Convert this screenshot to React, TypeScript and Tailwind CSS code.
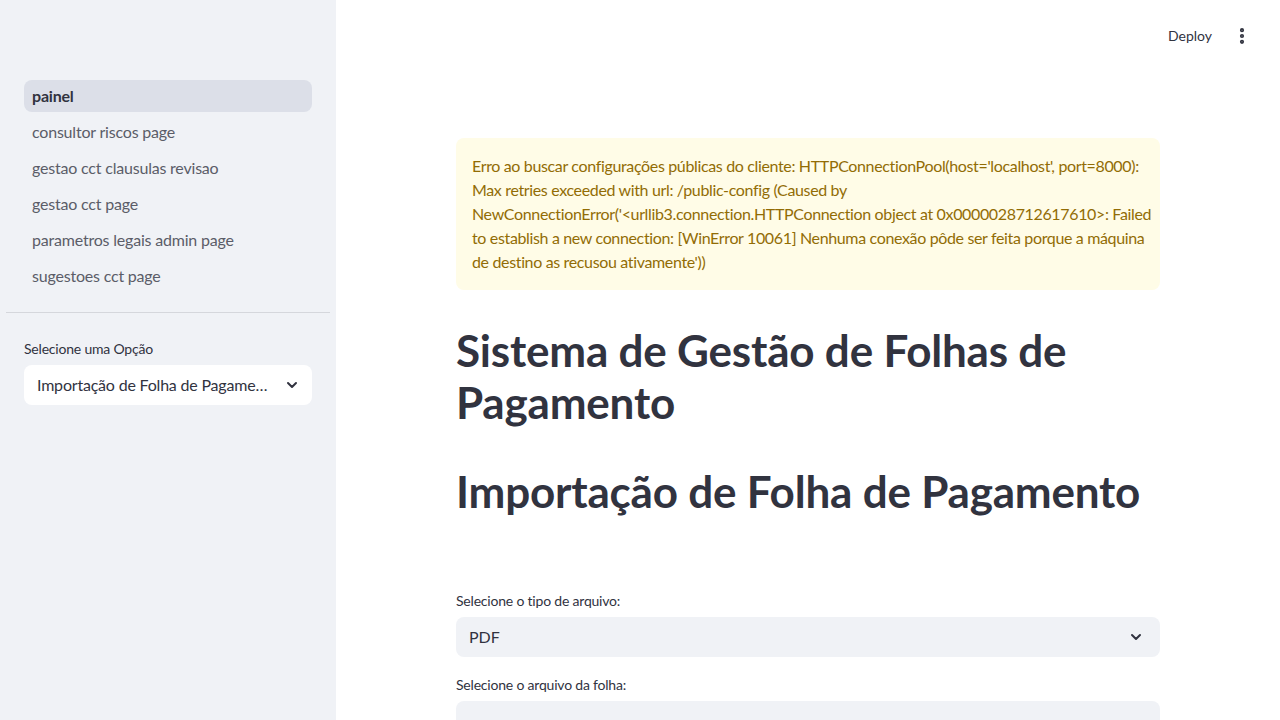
import { ChevronDown, EllipsisVertical } from 'lucide-react'

const pages = [
  'painel',
  'consultor riscos page',
  'gestao cct clausulas revisao',
  'gestao cct page',
  'parametros legais admin page',
  'sugestoes cct page',
]

const warningLines = [
  "Erro ao buscar configurações públicas do cliente: HTTPConnectionPool(host='localhost', port=8000):",
  'Max retries exceeded with url: /public-config (Caused by',
  "NewConnectionError('<urllib3.connection.HTTPConnection object at 0x0000028712617610>: Failed",
  'to establish a new connection: [WinError 10061] Nenhuma conexão pôde ser feita porque a máquina',
  "de destino as recusou ativamente'))",
]

function Sidebar() {
  return (
    <aside className="w-[336px] shrink-0 bg-[#f0f2f6] h-screen flex flex-col">
      <nav className="pt-20 px-6 flex flex-col gap-1 tracking-[-0.2px]">
        {pages.map((p, i) => (
          <div
            key={p}
            className={
              i === 0
                ? 'h-8 flex items-center px-2 rounded-lg bg-[#dcdfe8] font-bold text-[#31333f] text-base'
                : 'h-8 flex items-center px-2 rounded-lg text-[#5b5d68] text-base'
            }
          >
            {p}
          </div>
        ))}
      </nav>
      <div className="mx-1.5 mt-5 border-t border-[#d5d7dc]" />
      <div className="px-6 pt-[26px]">
        <div className="text-sm text-[#31333f] mb-1.5 tracking-[-0.2px]">Selecione uma Opção</div>
        <div className="h-10 bg-white rounded-lg flex items-center pl-[13px] pr-3 gap-2">
          <span className="flex-1 truncate text-base text-[#31333f] tracking-[-0.2px]">
            Importação de Folha de Pagamento
          </span>
          <ChevronDown className="h-4 w-4 shrink-0 text-[#31333f]" strokeWidth={3} />
        </div>
      </div>
    </aside>
  )
}

export default function App() {
  return (
    <div
      className="flex h-screen overflow-hidden bg-white text-[#31333f]"
      style={{ fontFamily: '"Source Sans Pro", Lato, "Noto Sans", sans-serif' }}
    >
      <Sidebar />
      <main className="flex-1 flex flex-col min-w-0">
        <header className="h-[72px] shrink-0 flex items-center justify-end pr-7 gap-5">
          <span className="text-sm text-[#31333f]">Deploy</span>
          <EllipsisVertical className="h-5 w-5 text-[#31333f]" strokeWidth={3} />
        </header>
        <div className="w-[704px] ml-[120px] pt-[66px] shrink-0">
          <div className="bg-[#fffce7] rounded-lg px-4 py-4 text-[#926c05] text-base leading-6 tracking-[-0.35px]">
            {warningLines.map((l) => (
              <div key={l} className="whitespace-nowrap">{l}</div>
            ))}
          </div>
          <h1 className="mt-[34px] text-[44px] leading-[52px] font-bold text-[#31333f] tracking-[-0.2px]">
            Sistema de Gestão de Folhas de
            <br />
            Pagamento
          </h1>
          <h2 className="mt-[37px] text-[44px] leading-[52px] font-bold text-[#31333f] tracking-[-0.2px] whitespace-nowrap">
            Importação de Folha de Pagamento
          </h2>
          <div className="mt-[74px] text-sm text-[#31333f] mb-1.5 tracking-[-0.2px]">Selecione o tipo de arquivo:</div>
          <div className="h-10 bg-[#f0f2f6] rounded-lg flex items-center pl-[13px] pr-4">
            <span className="flex-1 text-base">PDF</span>
            <ChevronDown className="h-4 w-4 text-[#31333f]" strokeWidth={3} />
          </div>
          <div className="mt-[18px] text-sm text-[#31333f] mb-1.5 tracking-[-0.2px]">Selecione o arquivo da folha:</div>
          <div className="h-24 bg-[#f0f2f6] rounded-lg" />
        </div>
      </main>
    </div>
  )
}
